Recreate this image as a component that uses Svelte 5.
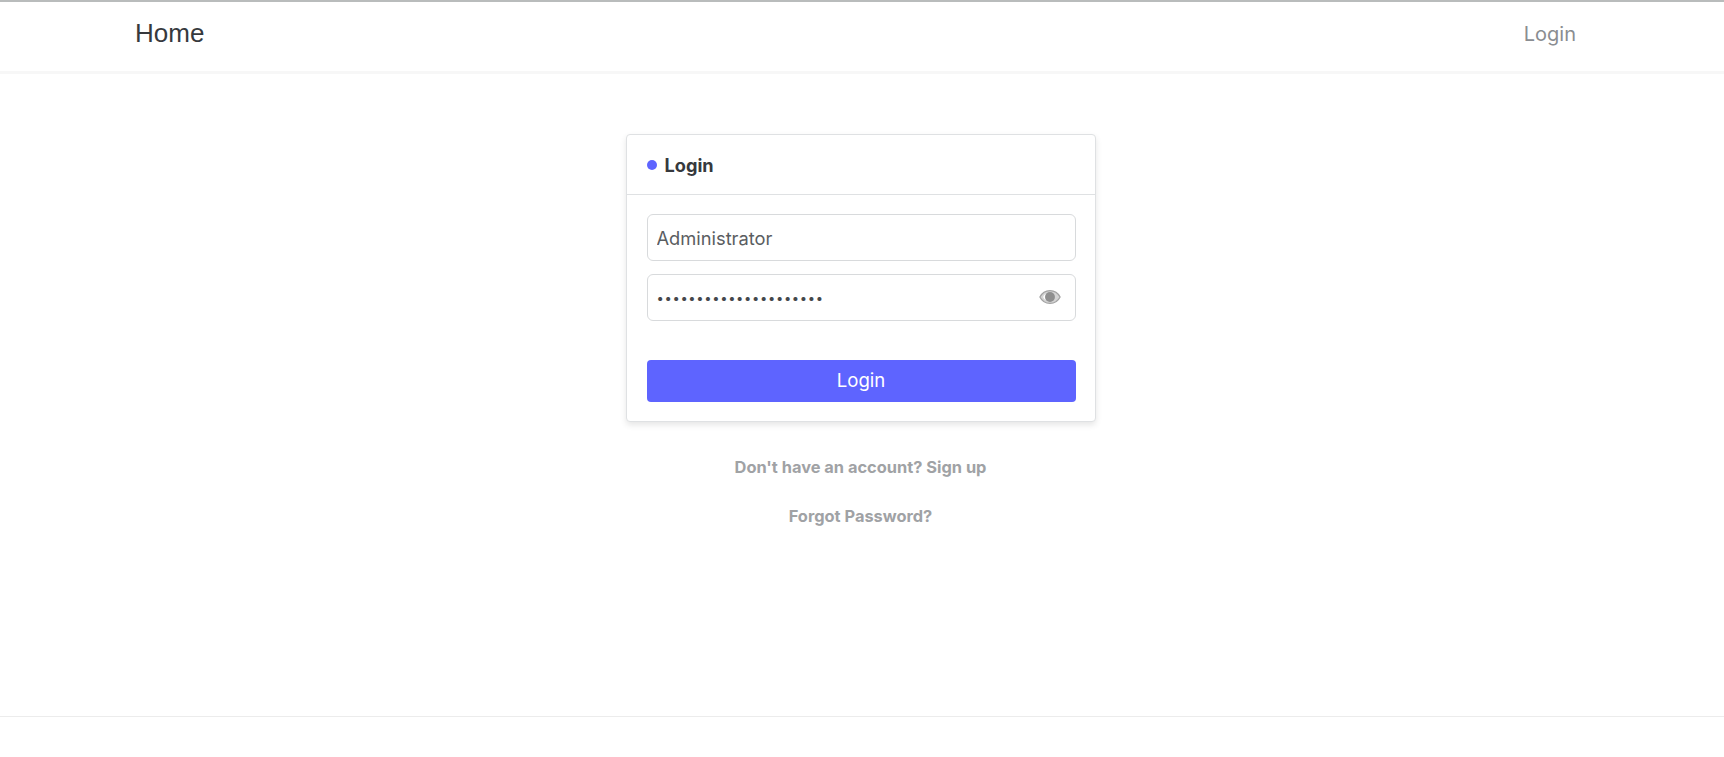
<script>
  let username = $state('Administrator');
  let password = $state('•••••••••••••••••••••');
</script>

<div class="page">
  <header class="navbar">
    <a class="brand" href="#home">Home</a>
    <a class="nav-link" href="#login">Login</a>
  </header>

  <main class="content">
    <section class="card">
      <div class="card-header">
        <span class="dot"></span>
        <h1>Login</h1>
      </div>
      <form class="card-body" onsubmit={(e) => e.preventDefault()}>
        <input class="field" type="text" bind:value={username} aria-label="Username" />
        <div class="password-wrap">
          <input class="field secret" type="text" bind:value={password} aria-label="Password" />
          <svg class="eye" viewBox="0 0 24 16" aria-hidden="true">
            <path d="M12 1C7 1 3 4 1 8c2 4 6 7 11 7s9-3 11-7c-2-4-6-7-11-7z" fill="#d4d4d4" stroke="#a3a3a3" stroke-width="1.4" />
            <circle cx="12" cy="8" r="5.4" fill="#8f8f8f" />
            <path d="M4.5 8c.6-1.6 1.6-2.8 3-3.6C6.8 5.4 6.4 6.6 6.4 8s.4 2.6 1.1 3.6C6.1 10.800 5.100 9.600 4.500 8z" fill="#fff" />
          </svg>
        </div>
        <button class="submit" type="submit">Login</button>
      </form>
    </section>

    <a class="aux first" href="#signup">Don't have an account? Sign up</a>
    <a class="aux" href="#forgot">Forgot Password?</a>
  </main>

  <footer class="footer"></footer>
</div>

<style>
  :global(body) {
    margin: 0;
    background: #fff;
    font-family: Inter, "Liberation Sans", sans-serif;
  }

  .page {
    height: 757px;
    display: flex;
    flex-direction: column;
    overflow: hidden;
    border-top: 2px solid #b9bcbc;
    box-sizing: border-box;
  }

  .navbar {
    height: 72px;
    flex: none;
    box-sizing: border-box;
    padding: 0 148px 6px 135px;
    display: flex;
    align-items: center;
    justify-content: space-between;
    border-bottom: 3px solid #f7f7f7;
  }

  .brand {
    font-family: "Liberation Sans", Arial, sans-serif;
    font-size: 26px;
    color: #36393d;
    text-decoration: none;
  }

  .nav-link {
    font-size: 20px;
    color: #8a8d91;
    text-decoration: none;
  }

  .content {
    flex: 1;
    display: flex;
    flex-direction: column;
    align-items: center;
    padding-top: 60px;
    padding-right: 3px;
  }

  .card {
    width: 470px;
    box-sizing: border-box;
    border: 1px solid #dfe1e3;
    border-radius: 4px;
    background: #fff;
    box-shadow: 0 3px 6px rgba(0, 0, 0, 0.1);
  }

  .card-header {
    height: 60px;
    box-sizing: border-box;
    padding: 0 20px;
    display: flex;
    align-items: center;
    gap: 8px;
    border-bottom: 1px solid #dfe1e3;
  }

  .dot {
    width: 10px;
    height: 10px;
    border-radius: 50%;
    background: #5e64ff;
  }

  h1 {
    margin: 0;
    font-size: 18.2px;
    font-weight: 700;
    color: #36393d;
  }

  .card-body {
    padding: 19px 19px 19px 20px;
    display: flex;
    flex-direction: column;
  }

  .field {
    width: 100%;
    height: 47px;
    box-sizing: border-box;
    padding: 0 9px;
    border: 1px solid #d8dadc;
    border-radius: 6px;
    background: #fff;
    font: 400 18.3px Inter, "Liberation Sans", sans-serif;
    color: #5a5d61;
    outline: none;
  }

  .password-wrap {
    position: relative;
    margin-top: 13px;
  }

  .secret {
    font-size: 13px;
    letter-spacing: 0.65px;
    color: #44474b;
  }

  .eye {
    position: absolute;
    right: 15px;
    top: 15px;
    width: 22px;
    height: 16px;
  }

  .submit {
    margin-top: 39px;
    height: 42px;
    padding: 0 0 2px;
    border: none;
    border-radius: 4px;
    background: #5e64ff;
    color: #fff;
    font: 400 18.6px Inter, "Liberation Sans", sans-serif;
  }

  .aux {
    font-size: 16.4px;
    font-weight: 700;
    color: #a0a2a5;
    text-decoration: none;
    margin-top: 31px;
    line-height: 18px;
  }

  .first {
    margin-top: 36px;
  }

  .footer {
    height: 40px;
    flex: none;
    border-top: 1px solid #ececec;
  }
</style>
